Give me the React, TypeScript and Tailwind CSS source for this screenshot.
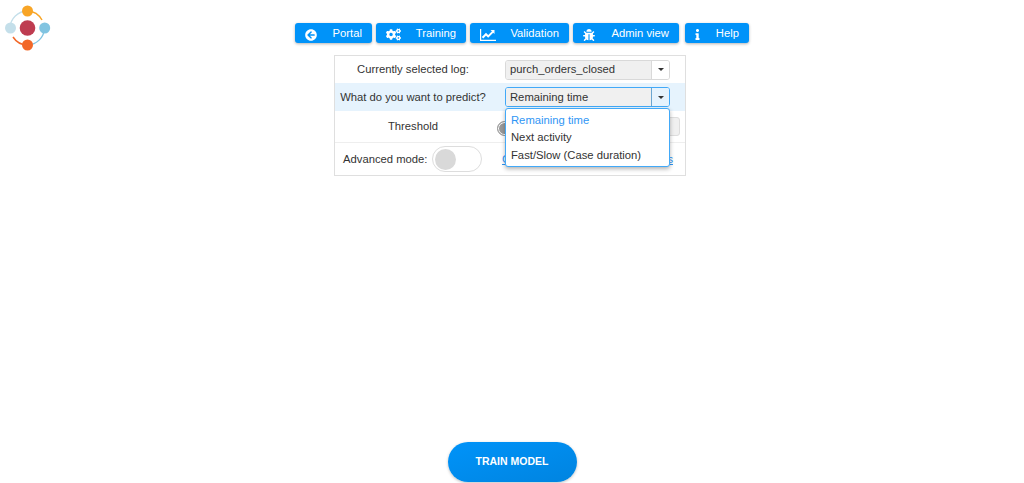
import type { ReactNode } from "react";
import { FaArrowCircleLeft, FaCogs, FaBug, FaInfo } from "react-icons/fa";

function NavButton({ icon, label, className }: { icon: ReactNode; label: string; className: string }) {
  return (
    <button className={`flex h-[20px] items-center justify-between rounded-[3px] bg-[#0093f9] pr-[10px] pl-[10px] leading-[14px] text-white shadow-[0_1px_3px_rgba(0,0,0,0.3)] ${className}`}>
      <span className="mt-[3px] flex text-[12px]">{icon}</span>
      <span className="whitespace-nowrap">{label}</span>
    </button>
  );
}

function LineChart() {
  return (
    <svg width="16" height="12" viewBox="0 0 16 12" fill="none" stroke="currentColor">
      <path d="M.6 0v11.400H16" strokeWidth="1.200" />
      <path d="M2.500 8.800L6 5.200l2.200 2.200L13 2.600" strokeWidth="2" />
      <path d="M10.500 1h4v4z" fill="currentColor" stroke="none" />
    </svg>
  );
}

function Caret() {
  return (
    <svg width="6" height="3" viewBox="0 0 6 3" className="fill-[#333]">
      <path d="M0 0h6L3 3z" />
    </svg>
  );
}

function Combo({ value, open = false, children }: { value: string; open?: boolean; children?: ReactNode }) {
  return (
    <div className={`relative flex h-[20px] w-[165px] rounded-[3px] border bg-white ${open ? "border-[#42a9f8]" : "border-[#d9d9d9]"}`}>
      <div className={`flex flex-1 items-center rounded-l-[2px] border-r bg-[#f0f0f0] pl-[4px] ${open ? "border-[#6aa5d0]" : "border-[#d9d9d9]"}`}>{value}</div>
      <div className={`flex w-[17px] items-center justify-center rounded-r-[2px] ${open ? "bg-[#e6f3fd]" : "bg-white"}`}><Caret /></div>
      {children}
    </div>
  );
}

function Logo() {
  return (
    <svg width="56" height="56" viewBox="0 0 56 56" fill="none">
      <path d="M10 28A17.500 17.500 0 0 1 27.500 11" stroke="#c4dfea" strokeWidth="1.300" />
      <path d="M27.500 11A17.500 17.500 0 0 1 42 20" stroke="#f8a526" strokeWidth="1.500" />
      <path d="M44.500 28A17.500 17.500 0 0 1 27.500 45" stroke="#81c4e1" strokeWidth="1.300" />
      <path d="M27.500 45A17.500 17.500 0 0 1 13 37" stroke="#f26829" strokeWidth="1.500" />
      <circle cx="27.500" cy="28" r="7.800" fill="#be3c50" />
      <circle cx="27.500" cy="11" r="5.500" fill="#f8a526" />
      <circle cx="10.500" cy="28" r="5.500" fill="#c4dfea" />
      <circle cx="44.700" cy="28" r="5.500" fill="#81c4e1" />
      <circle cx="27.500" cy="45" r="5.500" fill="#f26829" />
    </svg>
  );
}

export default function App() {
  return (
    <div className="flex h-[483px] w-[1024px] flex-col overflow-hidden bg-white font-['Liberation_Sans',Arial,sans-serif] text-[11.25px] text-[#333]">
      <header className="flex h-[55px] items-start">
        <div className="w-[295px]"><Logo /></div>
        <nav className="flex pt-[23px]">
          <NavButton className="mr-[4px] w-[77px]" icon={<FaArrowCircleLeft />} label="Portal" />
          <NavButton className="mr-[4px] w-[90px]" icon={<FaCogs size={15} />} label="Training" />
          <NavButton className="mr-[4px] w-[99px]" icon={<LineChart />} label="Validation" />
          <NavButton className="mr-[6px] w-[106px]" icon={<FaBug />} label="Admin view" />
          <NavButton className="w-[64px]" icon={<FaInfo size={11} className="-ml-[3px]" />} label="Help" />
        </nav>
      </header>
      <main className="ml-[334px] flex h-[121px] w-[352px] flex-col border border-[#dfdfdf]">
        <div className="flex h-[27px] items-center">
          <div className="w-[156px] text-center">Currently selected log:</div>
          <div className="ml-[14px]"><Combo value="purch_orders_closed" /></div>
        </div>
        <div className="flex h-[28px] items-center bg-[#e6f3fd]">
          <div className="w-[156px] text-center">What do you want to predict?</div>
          <div className="ml-[14px]">
            <Combo value="Remaining time" open>
              <ul className="absolute top-[20px] -left-px z-10 h-[59px] w-[165px] rounded-[3px] border border-[#42a9f8] bg-white pt-[2.5px] pl-[5px] leading-[17.8px] shadow-[0_2px_4px_rgba(0,0,0,0.3)]">
                <li className="text-[#3096f5]">Remaining time</li>
                <li>Next activity</li>
                <li>Fast/Slow (Case duration)</li>
              </ul>
            </Combo>
          </div>
        </div>
        <div className="flex h-[32px] items-center border-b border-[#eee]">
          <div className="w-[156px] text-center">Threshold</div>
          <div className="ml-[6px] flex w-[183px] items-center justify-between">
            <div className="mt-[4px] h-[15px] w-[15px] rounded-full border border-[#999] bg-[#999] shadow-[inset_0_0_0_1px_#fff]" />
            <div className="h-[19px] w-[40px] rounded-[3px] border border-[#ddd] bg-[#f0f0f0]" />
          </div>
        </div>
        <div className="flex h-[32px] items-center">
          <div className="ml-[8px] w-[89px]">Advanced mode:</div>
          <div className="flex h-[26px] w-[50px] items-center rounded-full border border-[#ddd] pl-[2px]">
            <div className="h-[21px] w-[21px] rounded-full bg-[#d9d9d9]" />
          </div>
          <div className="ml-[20px] flex w-[171px] justify-between text-[#3096f5] underline"><span>C</span><span>s</span></div>
        </div>
      </main>
      <footer className="mt-auto flex justify-center pb-px">
        <button className="h-[40px] w-[129px] rounded-full bg-linear-to-br from-[#0093f9] to-[#0084e0] text-[10.5px] font-bold text-white shadow-[0_1px_3px_rgba(0,0,0,0.25)]">TRAIN MODEL</button>
      </footer>
    </div>
  );
}
